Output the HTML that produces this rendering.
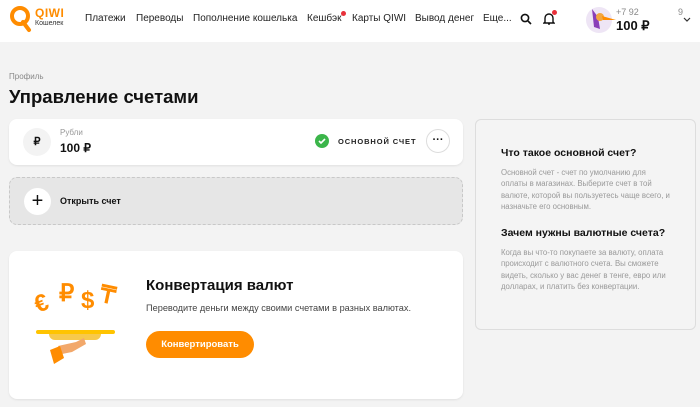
<!DOCTYPE html>
<html><head><meta charset="utf-8"><style>
*{box-sizing:border-box;margin:0;padding:0}
body{width:700px;height:407px;overflow:hidden;background:#f3f3f3;font-family:"Liberation Sans",sans-serif;color:#111;position:relative}
.hdr{position:absolute;left:0;top:0;width:700px;height:42px;background:#fff}
.nav{position:absolute;top:13px;font-size:10px;color:#222;white-space:nowrap}
.abs{position:absolute}
.card{position:absolute;background:#fff;border-radius:8px;box-shadow:0 1px 2px rgba(0,0,0,.08)}
.cur{position:absolute;font-weight:bold;color:#ff8c00;font-size:24px}
</style></head><body>
<div class="hdr">
  <svg class="abs" style="left:9px;top:5px" width="24" height="28" viewBox="0 0 24 28"><circle cx="11" cy="11" r="8" fill="none" stroke="#ff8c00" stroke-width="4"/><path d="M14 17 L20 25" stroke="#ff8c00" stroke-width="4" stroke-linecap="round"/></svg>
  <div class="abs" style="left:35px;top:6px;font-size:12px;font-weight:bold;color:#ff8c00;letter-spacing:.5px">QIWI</div>
  <div class="abs" style="left:35px;top:20px;font-size:7px;color:#333">Кошелек</div>
  <div class="nav" style="left:85px">Платежи</div>
  <div class="nav" style="left:136px">Переводы</div>
  <div class="nav" style="left:193px">Пополнение кошелька</div>
  <div class="nav" style="left:307px">Кешбэк</div>
  <div class="abs" style="left:341px;top:11px;width:5px;height:5px;border-radius:50%;background:#e8303a"></div>
  <div class="nav" style="left:352px">Карты QIWI</div>
  <div class="nav" style="left:415px">Вывод денег</div>
  <div class="nav" style="left:483px">Еще...</div>
  <svg class="abs" style="left:520px;top:13px" width="12" height="12" viewBox="0 0 12 12"><circle cx="5" cy="5" r="3.6" fill="none" stroke="#111" stroke-width="1.6"/><path d="M8 8l3 3" stroke="#111" stroke-width="1.6"/></svg>
  <svg class="abs" style="left:543px;top:12px" width="12" height="14" viewBox="0 0 12 14"><path d="M2 10V6a4 4 0 018 0v4l1 1H1z" fill="none" stroke="#111" stroke-width="1.4"/><path d="M5 12h2" stroke="#111" stroke-width="1.4"/></svg>
  <div class="abs" style="left:552px;top:10px;width:5px;height:5px;border-radius:50%;background:#e8303a"></div>
  <div class="abs" style="left:586px;top:7px;width:26px;height:26px;border-radius:50%;background:#eee5f5"></div>
  <svg class="abs" style="left:586px;top:5px" width="32" height="28" viewBox="0 0 32 28"><path d="M6 4l6 8 2 12-6-2z" fill="#8a3fb8"/><circle cx="14" cy="12" r="4" fill="#f3a640"/><path d="M16 11l14 4-13 0z" fill="#ff8c00"/></svg>
  <div class="abs" style="left:616px;top:7px;font-size:9px;color:#888">+7 92</div>
  <div class="abs" style="left:678px;top:7px;font-size:9px;color:#888">9</div>
  <div class="abs" style="left:616px;top:18px;font-size:13px;font-weight:bold">100 ₽</div>
  <svg class="abs" style="left:683px;top:17px" width="8" height="6" viewBox="0 0 8 6"><path d="M1 1l3 3 3-3" fill="none" stroke="#333" stroke-width="1.2"/></svg>
</div>
<div class="abs" style="left:9px;top:72px;font-size:8px;color:#888">Профиль</div>
<div class="abs" style="left:9px;top:86px;font-size:18.5px;font-weight:bold">Управление счетами</div>

<div class="card" style="left:9px;top:119px;width:454px;height:46px">
  <div class="abs" style="left:14px;top:9px;width:28px;height:28px;border-radius:50%;background:#f3f3f3;font-size:11px;font-weight:bold;text-align:center;line-height:28px">₽</div>
  <div class="abs" style="left:51px;top:9px;font-size:8px;color:#999">Рубли</div>
  <div class="abs" style="left:51px;top:22px;font-size:12px;font-weight:bold">100 ₽</div>
  <div class="abs" style="left:306px;top:15px;width:14px;height:14px;border-radius:50%;background:#3bb54a"></div>
  <svg class="abs" style="left:306px;top:15px" width="14" height="14" viewBox="0 0 14 14"><path d="M4 7l2 2 4-4" fill="none" stroke="#fff" stroke-width="1.6"/></svg>
  <div class="abs" style="left:329px;top:18px;font-size:7.5px;font-weight:bold;letter-spacing:.9px;color:#222">ОСНОВНОЙ СЧЕТ</div>
  <div class="abs" style="left:417px;top:10px;width:24px;height:24px;border-radius:50%;border:1px solid #ddd;text-align:center;font-size:11px;line-height:20px;font-weight:bold">···</div>
</div>
<div class="abs" style="left:9px;top:177px;width:454px;height:48px;border-radius:8px;background:#e6e6e6;border:1px dashed #c8c8c8">
  <div class="abs" style="left:14px;top:10px;width:27px;height:27px;border-radius:50%;background:#fff;text-align:center;line-height:26px;font-size:20px">+</div>
  <div class="abs" style="left:50px;top:18px;font-size:9px;font-weight:bold">Открыть счет</div>
</div>

<div class="card" style="left:9px;top:251px;width:454px;height:148px">
  <div class="cur" style="left:26px;top:39px;transform:rotate(-20deg)">€</div>
  <div class="cur" style="left:50px;top:28px">₽</div>
  <div class="cur" style="left:72px;top:36px">$</div>
  <div class="cur" style="left:91px;top:30px;transform:rotate(12deg)">₸</div>
  <div class="abs" style="left:27px;top:79px;width:79px;height:4px;border-radius:2px;background:#ffc400"></div>
  <div class="abs" style="left:40px;top:83px;width:52px;height:6px;border-radius:0 0 20px 20px;background:#f7c94b"></div>
  <svg class="abs" style="left:35px;top:85px" width="50" height="34" viewBox="0 0 50 34"><path d="M14 10 L32 6 L40 2 L42 8 L28 16 L18 18 Z" fill="#f2a86b"/><path d="M6 14 L16 10 L20 22 L10 28 Z" fill="#ff8c00"/></svg>
  <div class="abs" style="left:137px;top:26px;font-size:15px;font-weight:bold">Конвертация валют</div>
  <div class="abs" style="left:137px;top:52px;font-size:9.2px;color:#444">Переводите деньги между своими счетами в разных валютах.</div>
  <div class="abs" style="left:137px;top:80px;width:108px;height:27px;border-radius:14px;background:#ff8c00;color:#fff;font-size:9.5px;font-weight:bold;text-align:center;line-height:27px">Конвертировать</div>
</div>

<div class="abs" style="left:475px;top:119px;width:221px;height:211px;border:1px solid #ddd;border-radius:6px;background:#f4f4f4">
  <div class="abs" style="left:25px;top:27px;font-size:10.5px;font-weight:bold">Что такое основной счет?</div>
  <div class="abs" style="left:25px;top:47px;width:170px;font-size:7.8px;line-height:11.3px;color:#999">Основной счет - счет по умолчанию для оплаты в магазинах. Выберите счет в той валюте, которой вы пользуетесь чаще всего, и назначьте его основным.</div>
  <div class="abs" style="left:25px;top:107px;font-size:10.5px;font-weight:bold">Зачем нужны валютные счета?</div>
  <div class="abs" style="left:25px;top:127px;width:170px;font-size:7.8px;line-height:11.3px;color:#999">Когда вы что-то покупаете за валюту, оплата происходит с валютного счета. Вы сможете видеть, сколько у вас денег в тенге, евро или долларах, и платить без конвертации.</div>
</div>
</body></html>
